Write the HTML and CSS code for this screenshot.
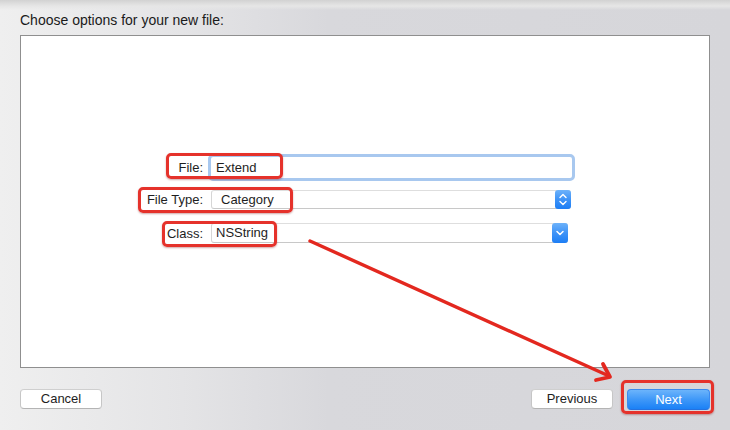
FILE: index.html
```html
<!DOCTYPE html>
<html>
<head>
<meta charset="utf-8">
<link rel="stylesheet" href="styles.css">
</head>
<body>
<div class="dialog">
  <div class="title">Choose options for your new file:</div>
  <div class="panel">
    <div class="form">
      <div class="row row-file">
        <div class="label">File:</div>
        <div class="field"><span class="field-text">Extend</span></div>
      </div>
      <div class="row row-type">
        <div class="label">File Type:</div>
        <div class="popup popup-type">
          <span class="popup-text">Category</span>
          <span class="stepper">
            <svg width="16" height="19" viewBox="0 0 16 19"><path d="M5 7.5 L8 4.5 L11 7.5 M5 11.5 L8 14.5 L11 11.5" fill="none" stroke="#fff" stroke-width="1.4" stroke-linecap="round" stroke-linejoin="round"/></svg>
          </span>
        </div>
      </div>
      <div class="row row-class">
        <div class="label">Class:</div>
        <div class="popup popup-class">
          <span class="popup-text combo">NSString</span>
          <span class="stepper">
            <svg width="16" height="20" viewBox="0 0 16 20"><path d="M5 8.5 L8 11.5 L11 8.5" fill="none" stroke="#fff" stroke-width="1.5" stroke-linecap="round" stroke-linejoin="round"/></svg>
          </span>
        </div>
      </div>
    </div>
  </div>
  <div class="footer">
    <button class="btn">Cancel</button>
    <div class="spacer"></div>
    <button class="btn">Previous</button>
    <button class="btn primary">Next</button>
  </div>
</div>

<div class="mark mark-file"></div>
<div class="mark mark-type"></div>
<div class="mark mark-class"></div>
<div class="mark mark-next"></div>

<svg class="arrow" width="730" height="430" viewBox="0 0 730 430">
  <line x1="310" y1="241" x2="609" y2="376" stroke="#e3281f" stroke-width="3.4" stroke-linecap="round"/>
  <polyline points="596,380 610,377 603,364" fill="none" stroke="#e3281f" stroke-width="3.8" stroke-linecap="round" stroke-linejoin="round"/>
</svg>
</body>
</html>
```
FILE: styles.css
```css
html, body {
  margin: 0;
  padding: 0;
}
body {
  width: 730px;
  height: 430px;
  overflow: hidden;
  position: relative;
  font-family: "Liberation Sans", Arial, sans-serif;
  font-size: 13px;
  color: #1e1e1e;
  background:
    linear-gradient(180deg, #d2d2d2 0px, #e6e6e6 6px, rgba(236,236,236,0) 10px),
    linear-gradient(90deg, #efefef 0%, #e4e4e6 25%, #d8d8dc 45%, #d6d6da 100%);
}
.dialog {
  display: flex;
  flex-direction: column;
  padding: 12px 20px 0 20px;
  height: 430px;
  box-sizing: border-box;
}
.title {
  font-size: 14px;
  line-height: 16px;
  height: 16px;
  margin-bottom: 7px;
  color: #1a1a1a;
}
.panel {
  height: 333px;
  box-sizing: border-box;
  border: 1px solid #8f8f8f;
  background: #ffffff;
}
.form {
  padding-top: 118px;
  display: flex;
  flex-direction: column;
}
.row {
  display: flex;
  align-items: center;
}
.label {
  width: 182px;
  text-align: right;
  flex: none;
}
.row-file { height: 27px; }
.row-type { height: 19px; margin-top: 9px; }
.row-class { height: 20px; margin-top: 14px; }

.field {
  margin-left: 5px;
  width: 367px;
  height: 27px;
  box-sizing: border-box;
  border: 3px solid #a8c8ef;
  border-radius: 5px;
  background: #fff;
  display: flex;
  align-items: center;
  padding-left: 5px;
}
.field-text { line-height: 16px; }

.popup {
  margin-left: 8px;
  box-sizing: border-box;
  border: 1px solid #d6d6d6;
  border-top-color: #dedede;
  border-bottom-color: #c8c8c8;
  border-right: none;
  border-radius: 3px;
  background: #fff;
  display: flex;
  align-items: center;
  position: relative;
}
.popup-type { width: 360px; height: 19px; }
.popup-class { width: 357px; height: 20px; }
.popup-text { padding-left: 9px; flex: 1; line-height: 16px; }
.popup-text.combo { padding-left: 4px; }
.stepper {
  width: 16px;
  align-self: stretch;
  margin: -1px 0;
  border-radius: 3px;
  background: linear-gradient(180deg, #6db2fa 0%, #3e93f7 50%, #1d7ef5 100%);
  display: flex;
  align-items: center;
  justify-content: center;
}
.stepper svg { display: block; }

.footer {
  display: flex;
  align-items: flex-start;
  margin-top: 21px;
  gap: 14px;
}
.spacer { flex: 1; }
.btn {
  font-family: "Liberation Sans", Arial, sans-serif;
  font-size: 13px;
  color: #1e1e1e;
  width: 82px;
  height: 20px;
  padding: 0;
  border: 1px solid #c6c6c6;
  border-top-color: #cfcfcf;
  border-bottom-color: #b4b4b4;
  border-radius: 4px;
  background: #ffffff;
  line-height: 18px;
}
.btn.primary {
  width: 83px;
  height: 21px;
  color: #ffffff;
  border: 1px solid #3a8af0;
  border-bottom-color: #2572e0;
  background: linear-gradient(180deg, #6cb4fb 0%, #3f98f8 50%, #1b81f6 100%);
}

.mark {
  position: absolute;
  box-sizing: border-box;
  border: 3px solid #e5322b;
  border-radius: 5px;
  box-shadow: 0 1px 2px rgba(120,0,0,0.35);
}
.mark-file { left: 166px; top: 153px; width: 117px; height: 26px; }
.mark-type { left: 138px; top: 187px; width: 155px; height: 26px; }
.mark-class { left: 162px; top: 221px; width: 115px; height: 26px; }
.mark-next { left: 621px; top: 380px; width: 93px; height: 34px; }

.arrow {
  position: absolute;
  left: 0;
  top: 0;
  pointer-events: none;
}
```
